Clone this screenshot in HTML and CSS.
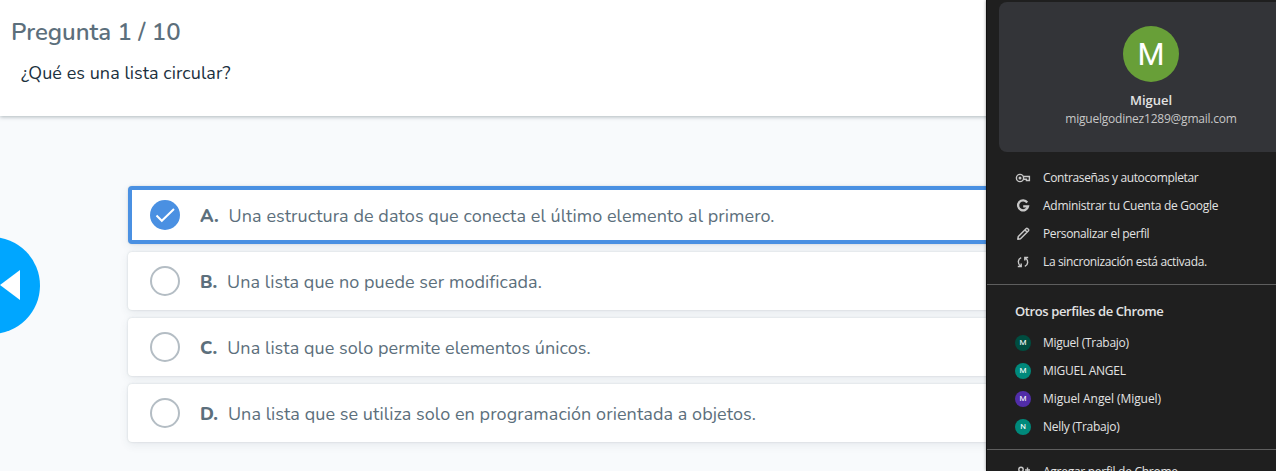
FILE: index.html
```html
<!DOCTYPE html>
<html lang="es">
<head>
<meta charset="utf-8">
<title>Pregunta 1 / 10</title>
<link rel="stylesheet" href="styles.css">
</head>
<body>
<main class="quiz">
  <header class="question">
    <h1 class="question-count"><span>Pregunta 1 / 10</span></h1>
    <p class="question-text"><span>¿Qué es una lista circular?</span></p>
  </header>
  <section class="options">
    <div class="option option-selected">
      <span class="radio radio-on"><svg width="30" height="30" viewBox="0 0 30 30"><path d="M6.5 15.5l5.3 5.3L24 9" fill="none" stroke="#fff" stroke-width="2"/></svg></span>
      <b class="letter">A.</b><span class="answer">Una estructura de datos que conecta el último elemento al primero.</span>
    </div>
    <div class="option"><span class="radio"></span><b class="letter">B.</b><span class="answer">Una lista que no puede ser modificada.</span></div>
    <div class="option"><span class="radio"></span><b class="letter">C.</b><span class="answer">Una lista que solo permite elementos únicos.</span></div>
    <div class="option"><span class="radio"></span><b class="letter">D.</b><span class="answer">Una lista que se utiliza solo en programación orientada a objetos.</span></div>
  </section>
  <div class="back"><svg width="20" height="30" viewBox="0 0 20 30"><path d="M20 0v30L0 15z" fill="#fff"/></svg></div>
</main>
<aside class="panel">
  <div class="account">
    <div class="avatar">M</div>
    <div class="name"><span>Miguel</span></div>
    <div class="email"><span>miguelgodinez1289@gmail.com</span></div>
  </div>
  <div class="menu">
    <div class="item tight"><svg class="icon" viewBox="0 0 16 16"><g fill="none" stroke="#c7c7c7" stroke-width="1.4"><circle cx="5" cy="8" r="3.6"/><path d="M8.2 6.5h6.2v4h-3V9.3H8.2"/></g><circle cx="5" cy="8" r="1.5" fill="#c7c7c7"/></svg><span>Contraseñas y autocompletar</span></div>
    <div class="item"><svg class="icon" viewBox="0 0 16 16"><path d="M12.2 4.5A5 5 0 1 0 13 8.4H8.2" fill="none" stroke="#c7c7c7" stroke-width="2.3"/></svg><span>Administrar tu Cuenta de Google</span></div>
    <div class="item tight"><svg class="icon" viewBox="0 0 16 16"><path d="M2.8 13.2l.5-2.7 8-8q.6-.5 1.2 0l1 1q.5.6 0 1.2l-8 8zM10 4l2 2" fill="none" stroke="#c7c7c7" stroke-width="1.5" stroke-linejoin="round"/></svg><span>Personalizar el perfil</span></div>
    <div class="item tight"><svg class="icon" viewBox="0 0 16 16"><path d="M6.2 3.6C2.7 5 2.3 9.5 5.5 12M2.8 12.5h3.4V9.4M9.8 12.4c3.5-1.4 3.9-5.9.7-8.4M13.2 3.5H9.8v3.1" fill="none" stroke="#c7c7c7" stroke-width="1.4"/></svg><span>La sincronización está activada.</span></div>
  </div>
  <div class="profiles">
    <h2 class="profiles-title"><span>Otros perfiles de Chrome</span></h2>
    <div class="item"><i class="dot dot-dark">M</i><span>Miguel (Trabajo)</span></div>
    <div class="item"><i class="dot dot-teal">M</i><span>MIGUEL ANGEL</span></div>
    <div class="item wide"><i class="dot dot-purple">M</i><span>Miguel Angel (Miguel)</span></div>
    <div class="item"><i class="dot dot-teal">N</i><span>Nelly (Trabajo)</span></div>
  </div>
  <div class="add">
    <div class="item"><svg class="icon" viewBox="0 0 16 16"><g fill="none" stroke="#c7c7c7" stroke-width="1.4"><circle cx="6" cy="5.5" r="2.2"/><path d="M1.7 12.5c0-4 8.6-4 8.6 0zM12.5 3.5v5M10 6h5"/></g></svg><span>Agregar perfil de Chrome</span></div>
  </div>
</aside>
</body>
</html>
```
FILE: styles.css
```css
* { box-sizing: border-box; }
body { margin: 0; height: 471px; overflow: hidden; position: relative; background: #f8fafc; font-family: Nunito, "Noto Sans", sans-serif; color: #5c6f7c; }
.quiz { height: 471px; overflow: hidden; }
.question { height: 116px; padding: 16px 0 0 11px; background: #fff; box-shadow: 0 1px 4px rgba(60, 80, 90, .4); }
.question-count { margin: 0; font-size: 24px; line-height: 32px; font-weight: 600; }
.question-text { margin: 11px 0 0 10px; font-size: 18px; line-height: 28px; color: #1c313e; letter-spacing: .06px; }
.options { display: flex; flex-direction: column; gap: 8px; margin: 70px 0 0 128px; }
.option { display: flex; align-items: center; height: 58px; padding: 0 22px; background: #fff; border-radius: 4px; box-shadow: 0 0 2px rgba(60, 80, 90, .22), 0 3px 10px rgba(60, 80, 90, .09); }
.option-selected { border: 4px solid #4a90e2; padding: 0 18px; }
.radio { width: 30px; height: 30px; flex: none; border: 2px solid #b4bdc4; border-radius: 50%; margin-right: 20px; }
.radio-on { border: 0; background: #4a90e2; }
.radio svg { display: block; }
.letter { font-size: 18px; line-height: 26px; font-weight: 800; margin-right: 10px; padding-top: 2px; }
.answer { font-size: 18px; line-height: 26px; padding-top: 2px; letter-spacing: .07px; white-space: nowrap; }
.back { position: absolute; left: -57px; top: 236.5px; width: 97px; height: 97px; border-radius: 50%; background: #00a6ff; padding: 33.5px 0 0 57px; }
.back svg { display: block; }
.panel { position: absolute; left: 986px; top: 0; width: 330px; height: 471px; overflow: hidden; background: #1f1f1f; border-left: 1px solid #111; color: #e3e3e3; font: 12px/16px "Segoe UI", "Open Sans", sans-serif; box-shadow: 0 0 3px rgba(0, 0, 0, .4); white-space: nowrap; }
.account { width: 304px; height: 150px; margin: 2px 0 0 12px; padding-top: 24px; background: #333438; border-radius: 8px; display: flex; flex-direction: column; align-items: center; }
.avatar { width: 56px; height: 56px; border-radius: 50%; background: #689f38; color: #fff; font: 31px/57px Roboto, sans-serif; text-align: center; }
.name { margin-top: 9px; font-size: 13px; font-weight: 600; line-height: 18px; }
.email { margin-top: 1px; line-height: 18px; color: #c7c7c7; letter-spacing: -.22px; }
.menu { padding: 12px 0 8px 28px; border-bottom: 1px solid #5e5e5e; }
.item { display: flex; align-items: center; gap: 12px; height: 28px; letter-spacing: -.27px; }
.tight { letter-spacing: -.36px; }
.wide { letter-spacing: -.07px; }
.icon { width: 16px; height: 16px; flex: none; }
.profiles { padding: 16px 0 8px 28px; border-bottom: 1px solid #5e5e5e; }
.profiles-title { margin: 0 0 8px; font-size: 13px; line-height: 20px; font-weight: 600; letter-spacing: -.4px; }
.dot { width: 16px; height: 16px; border-radius: 50%; font: 8px/16px Roboto, sans-serif; text-align: center; letter-spacing: 0; color: #fff; }
.dot-dark { background: #004d40; }
.dot-teal { background: #00897b; }
.dot-purple { background: #512da8; }
.add { padding: 8px 0 0 28px; }
```
